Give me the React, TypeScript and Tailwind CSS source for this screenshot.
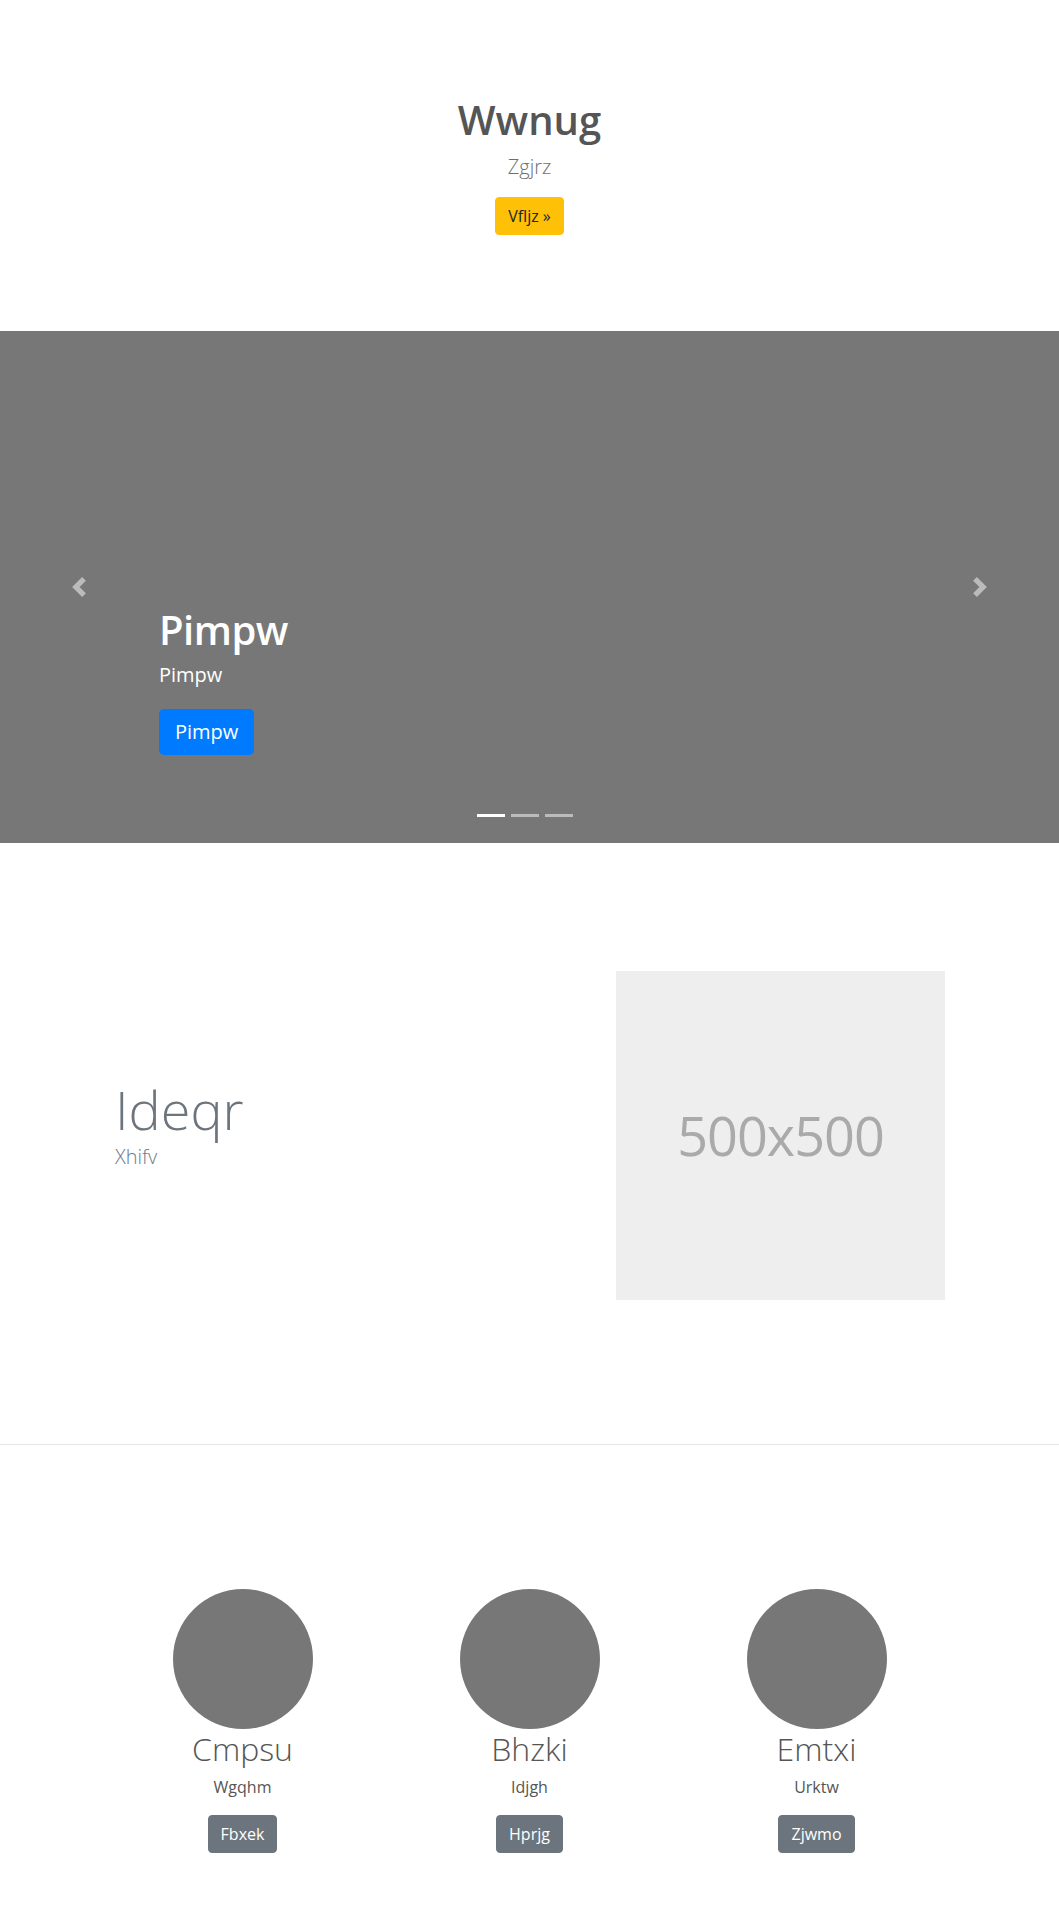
import React from "react";

const people = [
  { name: "Cmpsu", sub: "Wgqhm", btn: "Fbxek" },
  { name: "Bhzki", sub: "Idjgh", btn: "Hprjg" },
  { name: "Emtxi", sub: "Urktw", btn: "Zjwmo" },
];

export default function App() {
  return (
    <div className="w-[1059px] bg-white" style={{ fontFamily: '"Open Sans", "Noto Sans", sans-serif' }}>
      {/* Hero */}
      <section className="flex flex-col items-center pt-[96px] pb-[96px] text-center">
        <h1 className="text-[40px] leading-[1.2] font-semibold text-[#555] mb-2">Wwnug</h1>
        <p className="text-[20px] leading-[1.5] font-light text-[#6f6f6f] mb-[15px]">Zgjrz</p>
        <button className="rounded border border-[#ffc107] bg-[#ffc107] px-3 py-1.5 text-base leading-6 text-[#212529]">
          Vfljz »
        </button>
      </section>

      {/* Carousel */}
      <section className="relative h-[512px] overflow-hidden bg-[#777]">
        <div className="absolute inset-y-0 left-0 flex w-[15%] items-center justify-center">
          <svg viewBox="0 0 8 8" className="h-5 w-5 opacity-50" fill="#fff">
            <path d="M5.25 0l-4 4 4 4 1.5-1.5L4.25 4l2.5-2.5L5.25 0z" />
          </svg>
        </div>
        <div className="absolute inset-y-0 right-0 flex w-[15%] items-center justify-center">
          <svg viewBox="0 0 8 8" className="h-5 w-5 opacity-50" fill="#fff">
            <path d="M2.75 0l-1.5 1.5L3.75 4l-2.5 2.5L2.75 8l4-4-4-4z" />
          </svg>
        </div>
        <div className="absolute bottom-[88px] left-[159px] text-left text-white">
          <h2 className="text-[40px] leading-[1.2] font-semibold tracking-[-0.5px] mb-[6px]">Pimpw</h2>
          <p className="text-[20px] leading-[1.5] mb-[19px]">Pimpw</p>
          <button className="rounded-[5px] bg-[#007bff] px-4 py-2 text-[20px] leading-[30px] text-white">
            Pimpw
          </button>
        </div>
        <div className="absolute inset-x-0 bottom-[26px] flex justify-center gap-[6px] pr-[9px]">
          <span className="h-[3px] w-[28px] bg-white" />
          <span className="h-[3px] w-[28px] bg-white/50" />
          <span className="h-[3px] w-[28px] bg-white/50" />
        </div>
      </section>

      {/* Feature */}
      <section className="flex items-center border-b border-[#e5e5e5] pt-[128px] pb-[144px] pl-[115px]">
        <div className="w-[501px]">
          <h2 className="text-[54px] leading-[1.2] font-light text-[#6c757d]">Ideqr</h2>
          <p className="text-[20px] leading-[1.5] font-light text-[#6c7a8c] mb-[22px]">Xhifv</p>
        </div>
        <div className="flex h-[329px] w-[329px] items-center justify-center bg-[#eee]">
          <span className="text-[54px] tracking-[-1px] text-[#aaa]">500x500</span>
        </div>
      </section>

      {/* People */}
      <section className="pt-[144px] pb-[65px]">
        <div className="mx-auto grid w-[861px] grid-cols-3">
          {people.map((p) => (
            <div key={p.name} className="flex flex-col items-center text-center">
              <div className="h-[140px] w-[140px] rounded-full bg-[#777]" />
              <h3 className="mt-[1px] mb-[7px] text-[32px] leading-[1.2] font-light text-[#555]">{p.name}</h3>
              <p className="mb-4 text-base leading-6 text-[#555]">{p.sub}</p>
              <button className="rounded border border-[#6c757d] bg-[#6c757d] px-3 py-1.5 text-base leading-6 text-white">
                {p.btn}
              </button>
            </div>
          ))}
        </div>
      </section>
    </div>
  );
}
